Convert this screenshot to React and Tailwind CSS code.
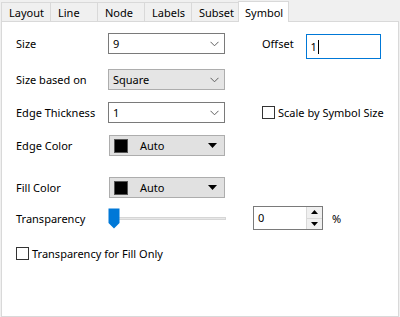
import React from "react";

const tabs = [
  { name: "Layout", w: 49 },
  { name: "Line", w: 47 },
  { name: "Node", w: 47 },
  { name: "Labels", w: 47 },
  { name: "Subset", w: 47 },
];

function Chevron() {
  return (
    <svg width="9" height="6" viewBox="0 0 9 6" className="text-[#606060]">
      <path d="M0.5 0.8 L4.5 4.8 L8.5 0.8" fill="none" stroke="currentColor" strokeWidth="1" />
    </svg>
  );
}

function Combo({ value, grey }) {
  return (
    <div
      className={
        "flex items-center justify-between w-[117px] h-[21px] border pl-[4px] pr-[5px] " +
        (grey ? "bg-[#e5e5e5] border-[#adadad]" : "bg-white border-[#7a7a7a]")
      }
    >
      <span>{value}</span>
      <Chevron />
    </div>
  );
}

function ColorCombo() {
  return (
    <div className="flex items-center w-[116px] h-[21px] border border-[#adadad] bg-[#e1e1e1] pl-[4px] pr-[7px]">
      <div className="w-[14px] h-[14px] bg-black border border-[#555]" />
      <span className="ml-[12px] flex-1">Auto</span>
      <svg width="9" height="5" viewBox="0 0 9 5">
        <path d="M0 0 H9 L4.5 5 Z" fill="#000" />
      </svg>
    </div>
  );
}

function Check({ label }) {
  return (
    <div className="flex items-center">
      <div className="w-[13px] h-[13px] border border-[#333] bg-white" />
      <span className="ml-[3px]">{label}</span>
    </div>
  );
}

export default function App() {
  return (
    <div
      className="w-[400px] h-[317px] bg-[#f0f0f0] text-black text-[11px] leading-none"
      style={{ fontFamily: "'Segoe UI', 'Noto Sans', 'Open Sans', sans-serif" }}
    >
      <div className="flex items-end h-[21px] pl-[1px]">
        {tabs.map((t) => (
          <div
            key={t.name}
            className="h-[19px] border-t border-l border-[#d9d9d9] bg-[#f0f0f0] flex items-center pl-[7px]"
            style={{ width: t.w }}
          >
            {t.name}
          </div>
        ))}
        <div className="relative z-10 w-[51px] h-[21px] -mb-px bg-white border-t border-l border-r border-[#d9d9d9] flex items-center pl-[6px]">
          Symbol
        </div>
      </div>

      <div className="w-[398px] h-[296px] ml-px border border-[#d9d9d9] bg-white pl-[14px] pt-[11px]">
        <div className="flex items-start">
          <div className="w-[92px] h-[21px] flex items-center">Size</div>
          <Combo value="9" />
          <div className="ml-[37px] h-[21px] flex items-center">Offset</div>
          <div className="ml-[12px] mt-px w-[75px] h-[25px] border border-[#0078d7] flex items-center pl-[4px]">
            1<span className="w-px h-[14px] bg-black ml-px" />
          </div>
        </div>

        <div className="flex items-center mt-[10px]">
          <div className="w-[92px]">Size based on</div>
          <Combo value="Square" grey />
        </div>

        <div className="flex items-center mt-[12px]">
          <div className="w-[92px]">Edge Thickness</div>
          <Combo value="1" />
          <div className="ml-[37px]">
            <Check label="Scale by Symbol Size" />
          </div>
        </div>

        <div className="flex items-center mt-[12px]">
          <div className="w-[93px]">Edge Color</div>
          <ColorCombo />
        </div>

        <div className="flex items-center mt-[21px]">
          <div className="w-[93px]">Fill Color</div>
          <ColorCombo />
        </div>

        <div className="flex items-center mt-[8px]">
          <div className="w-[92px]">Transparency</div>
          <div className="relative w-[118px] h-[24px] flex items-center">
            <div className="ml-[6px] w-[112px] h-[3px] bg-[#e7e7e7] border border-[#d6d6d6]" />
            <svg className="absolute left-0 top-[2px]" width="12" height="21" viewBox="0 0 12 21">
              <path d="M0.5 0.5 H11.5 V15 L6 20.5 L0.5 15 Z" fill="#0078d7" />
            </svg>
          </div>
          <div className="ml-[27px] w-[70px] h-[24px] border border-[#7a7a7a] flex">
            <div className="flex-1 pl-[4px] pt-[5px]">0</div>
            <div className="w-[16px] flex flex-col border-l border-[#d9d9d9]">
              <div className="flex-1 flex items-center justify-center bg-[#f0f0f0] border-b border-[#d9d9d9]">
                <svg width="7" height="4" viewBox="0 0 7 4"><path d="M0 4 H7 L3.5 0 Z" fill="#000" /></svg>
              </div>
              <div className="flex-1 flex items-center justify-center bg-[#f0f0f0]">
                <svg width="7" height="4" viewBox="0 0 7 4"><path d="M0 0 H7 L3.5 4 Z" fill="#000" /></svg>
              </div>
            </div>
          </div>
          <div className="ml-[9px]">%</div>
        </div>

        <div className="mt-[17px]">
          <Check label="Transparency for Fill Only" />
        </div>
      </div>
    </div>
  );
}
